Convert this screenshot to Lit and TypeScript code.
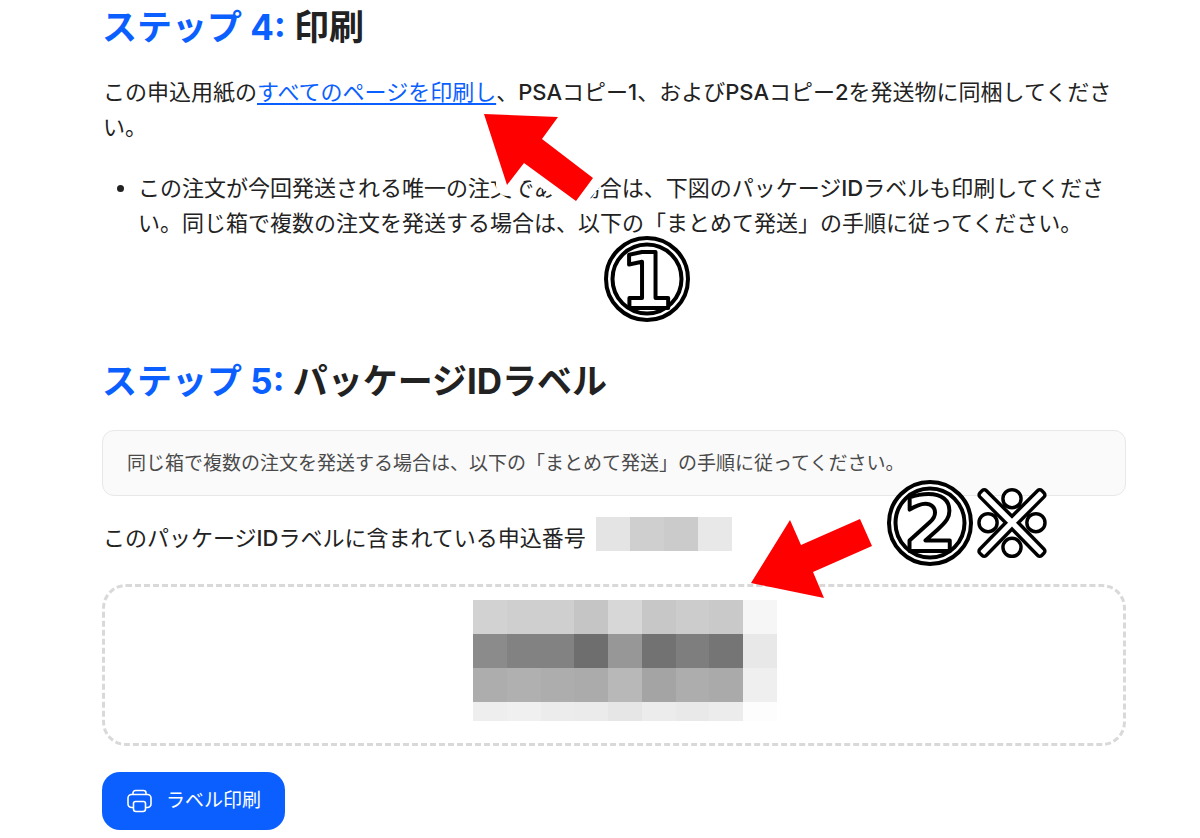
import { LitElement, html, svg, css } from "lit";
import { customElement } from "lit/decorators.js";

const NUMBER_MASK = ["#e4e4e4", "#cfcfcf", "#cbcbcb", "#e8e8e8"];

const LABEL_MASK = [
  ["#d2d2d2", "#cfcfcf", "#cfcfcf", "#c5c5c5", "#d7d7d7", "#c7c7c7", "#cccccc", "#c9c9c9", "#f6f6f6"],
  ["#8b8b8b", "#828282", "#828282", "#6e6e6e", "#979797", "#727272", "#7e7e7e", "#757575", "#e8e8e8"],
  ["#adadad", "#b0b0b0", "#adadad", "#ababab", "#b8b8b8", "#a4a4a4", "#adadad", "#aaaaaa", "#efefef"],
  ["#eeeeee", "#f0f0f0", "#ececec", "#ebebeb", "#e6e6e6", "#ececec", "#e9e9e9", "#ececec", "#fdfdfd"],
];

@customElement("print-icon")
export class PrintIcon extends LitElement {
  static styles = css`
    :host { display: block; }
    .icon { display: block; width: 26px; height: 24px; }
  `;
  render() {
    return html`<svg class="icon" viewBox="0 0 26 24" fill="none" stroke="#fff" stroke-width="1.6" stroke-linejoin="round" aria-hidden="true">
      ${svg`<path d="M7 5.5V4A2.5 2.5 0 0 1 9.5 1.500h8A2.500 2.500 0 0 1 20 4v1.500" />
      <path d="M7.500 18.500H5.500A3.500 3.500 0 0 1 2 15V9A3.500 3.500 0 0 1 5.500 5.500h16A3.500 3.500 0 0 1 25 9v6a3.500 3.500 0 0 1-3.500 3.500h-2" />
      <path d="M9.500 12.500h8a2 2 0 0 1 2 2V20a2.500 2.500 0 0 1-2.500 2.500h-7A2.500 2.500 0 0 1 7.500 20v-5.500a2 2 0 0 1 2-2Z" />`}
    </svg>`;
  }
}

@customElement("app-root")
export class AppRoot extends LitElement {
  static styles = css`
    :host {
      display: block;
      position: relative;
      background: #fff;
      color: #222;
      font-family: Inter, "Noto Sans CJK JP", sans-serif;
      font-size: 22px;
      line-height: 35px;
    }
    .page { padding: 1px 74px 8px 102px; }
    h2, p, ul { margin: 0; }
    h2 { font-size: 35px; line-height: 52px; font-weight: 700; }
    .step { color: #0b5fff; }
    .latin { font-weight: 500; }
    .intro { margin-top: 22px; padding-left: 1px; }
    a { color: #0b5fff; text-decoration: underline; text-decoration-thickness: 2px; text-underline-offset: 3px; }
    .list { margin-top: 26px; padding-left: 36px; }
    .section { margin-top: 114px; }
    .notice {
      margin-top: 23px;
      padding: 16px 24px 14px;
      border: 1px solid #e8e8e8;
      border-radius: 12px;
      background: #fafafa;
      color: #4a4a4a;
      font-size: 19px;
      line-height: 34px;
    }
    .number { display: flex; align-items: flex-start; gap: 10px; margin-top: 21px; padding-left: 1px; }
    .number-text { padding-top: 4px; }
    .mask { display: grid; grid-auto-rows: 34px; }
    .mask-number { width: 136px; grid-template-columns: repeat(4, 1fr); }
    .label {
      display: flex;
      justify-content: center;
      margin-top: 28px;
      padding: 13px 0 22px 22px;
      border: 3px dashed #d9d9d9;
      border-radius: 24px;
    }
    .mask-label { width: 304px; grid-template-columns: repeat(9, 1fr); grid-template-rows: 34px 34px 34px 19px; }
    .print {
      display: flex;
      align-items: center;
      gap: 14px;
      margin-top: 26px;
      padding: 12px 24px;
      border: 0;
      border-radius: 18px;
      background: #0b5fff;
      color: #fff;
      font: inherit;
      font-size: 19px;
      line-height: 34px;
    }
    .marks { position: absolute; left: 0; top: 0; overflow: visible; pointer-events: none; }
    .ring { fill: none; stroke: #000; stroke-width: 4px; }
    .disc { fill: #fff; }
    .digit {
      font-family: "DejaVu Sans", sans-serif;
      font-size: 76px;
      font-weight: 700;
      text-anchor: middle;
      fill: #fff;
      stroke: #000;
      stroke-width: 4px;
      stroke-linejoin: round;
    }
    .note {
      font-family: "Noto Sans CJK JP", sans-serif;
      font-size: 84px;
      font-weight: 400;
      fill: #fff;
      stroke: #000;
      stroke-width: 9px;
      stroke-linejoin: round;
    }
    .note-inner { stroke: #fff; stroke-width: 2px; }
    .arrow { fill: #f00; }
    .halo { fill: #fff; stroke: #fff; stroke-width: 22px; stroke-linejoin: round; }
  `;

  render() {
    return html`
      <main class="page">
        <section>
          <h2><span class="step">ステップ 4:</span> 印刷</h2>
          <p class="intro">この申込用紙の<a href="#print">すべてのページを印刷し</a>、<span class="latin">PSA</span>コピー<span class="latin">1</span>、および<span class="latin">PSA</span>コピー<span class="latin">2</span>を発送物に同梱してください。</p>
          <ul class="list">
            <li>この注文が今回発送される唯一の注文である場合は、下図のパッケージ<span class="latin">ID</span>ラベルも印刷してください。同じ箱で複数の注文を発送する場合は、以下の「まとめて発送」の手順に従ってください。</li>
          </ul>
        </section>
        <section class="section">
          <h2><span class="step">ステップ 5:</span> パッケージIDラベル</h2>
          <p class="notice">同じ箱で複数の注文を発送する場合は、以下の「まとめて発送」の手順に従ってください。</p>
          <div class="number">
            <span class="number-text">このパッケージ<span class="latin">ID</span>ラベルに含まれている申込番号</span>
            <div class="mask mask-number">${NUMBER_MASK.map((c) => html`<i style="background:${c}"></i>`)}</div>
          </div>
          <div class="label">
            <div class="mask mask-label">${LABEL_MASK.flat().map((c) => html`<i style="background:${c}"></i>`)}</div>
          </div>
          <button class="print" id="print" type="button"><print-icon></print-icon>ラベル印刷</button>
        </section>
      </main>
      <svg class="marks" width="1200" height="838" viewBox="0 0 1200 838">
        <path class="halo" d="M505 135 542 139 593 178 576 198 524 163 507 185Z" />
        <path class="arrow" d="M484 114 558 117 542 139 593 178 576 201 524 163 507 185Z" />
        <path class="arrow" d="M751 583 790 520 801 545 860 519 872 546 813 572 824 598Z" />
        <circle class="disc" cx="647" cy="279" r="42" />
        <circle class="ring" cx="647" cy="279" r="41" />
        <circle class="ring" cx="647" cy="279" r="34.500" />
        <text class="digit" x="647" y="308">1</text>
        <circle class="disc" cx="930" cy="523" r="42" />
        <circle class="ring" cx="930" cy="523" r="41" />
        <circle class="ring" cx="930" cy="523" r="34.500" />
        <text class="digit" x="930" y="551">2</text>
        <text class="note" x="970" y="555">※</text>
        <text class="note note-inner" x="970" y="555" aria-hidden="true">※</text>
      </svg>
    `;
  }
}
